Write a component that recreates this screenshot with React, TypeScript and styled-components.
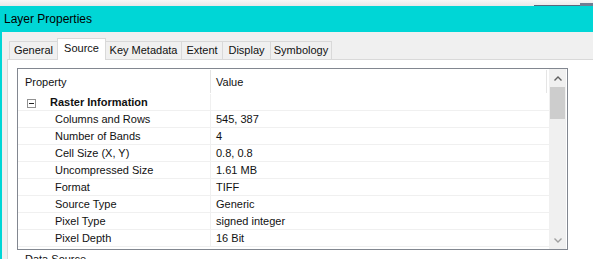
import styled, { createGlobalStyle } from "styled-components";

const Global = createGlobalStyle`
    html, body {
        margin: 0;
        padding: 0;
        background: #f0f0f0;
    }
`;

const TEAL = "#00d6d6";

const Frame = styled.div`
    width: 593px;
    height: 259px;
    overflow: hidden;
    background: #f0f0f0;
    display: flex;
    flex-direction: column;
    font-family: "Liberation Sans", Arial, sans-serif;
    font-size: 11px;
    color: #111;
`;
const TopStrip = styled.div`
    height: 6px;
    flex: none;
    background: linear-gradient(#f7f7f7, #e8e8e8);
    display: flex;
    justify-content: flex-end;
    align-items: flex-end;
`;
const EdgeLine = styled.div`
    width: 46px;
    height: 1px;
    background: #58677c;
`;
const EdgeBlock = styled.div`
    width: 13px;
    height: 3px;
    background: #6f7e93;
`;
const TitleBar = styled.div`
    height: 26px;
    flex: none;
    background: ${TEAL};
    padding-left: 4px;
    font-size: 12px;
    line-height: 26px;
    color: #000;
`;
const Body = styled.div`
    flex: 1;
    min-height: 0;
    border-left: 2px solid ${TEAL};
    display: flex;
    flex-direction: column;
`;
const TabStrip = styled.div`
    display: flex;
    align-items: flex-end;
    padding: 6px 0 0 7px;
    flex: none;
`;
const Tab = styled.div<{ $active?: boolean; $w: number }>`
    box-sizing: border-box;
    width: ${(p) => p.$w}px;
    height: ${(p) => (p.$active ? 22 : 18)}px;
    margin-left: -1px;
    margin-bottom: ${(p) => (p.$active ? -1 : 0)}px;
    padding-top: ${(p) => (p.$active ? 1 : 0)}px;
    border: 1px solid #d9d9d9;
    border-bottom: none;
    background: ${(p) => (p.$active ? "#fff" : "#f0f0f0")};
    position: relative;
    z-index: ${(p) => (p.$active ? 1 : 0)};
    text-align: center;
    line-height: 17px;
    white-space: nowrap;
    &:first-child {
        margin-left: 0;
    }
`;
const Panel = styled.div`
    flex: 1;
    margin-left: 5px;
    background: #fff;
    border: 1px solid #d9d9d9;
    border-right: none;
    padding: 8px 0 0 9px;
`;
const GridBox = styled.div`
    box-sizing: border-box;
    width: 551px;
    height: 182px;
    border: 1px solid #828790;
    display: flex;
    background: #fff;
`;
const Table = styled.div`
    width: 531px;
    overflow: hidden;
`;
const HeaderRow = styled.div`
    height: 25px;
    display: grid;
    grid-template-columns: 193px 336px;
`;
const HeaderCell = styled.div<{ $pad: number }>`
    box-sizing: border-box;
    height: 23px;
    margin-top: 1px;
    padding: 2px 0 0 ${(p) => p.$pad}px;
    line-height: 21px;
    border-right: 1px solid #e5e5e5;
`;
const Row = styled.div`
    box-sizing: border-box;
    height: 17px;
    display: grid;
    grid-template-columns: 193px 1fr;
    border-bottom: 1px solid #f0f0f0;
    line-height: 17px;
    white-space: nowrap;
`;
const NameCell = styled.div<{ $pad: number }>`
    border-right: 1px solid #f0f0f0;
    padding-left: ${(p) => p.$pad}px;
    display: flex;
    align-items: center;
`;
const ValueCell = styled.div`
    padding-left: 5px;
`;
const Expander = styled.span`
    box-sizing: border-box;
    width: 9px;
    height: 9px;
    margin-top: 1px;
    border: 1px solid #919191;
    position: relative;
    flex: none;
    &::after {
        content: "";
        position: absolute;
        left: 1px;
        top: 3px;
        width: 5px;
        height: 1px;
        background: #222;
    }
`;
const GroupLabel = styled.span`
    font-weight: bold;
    margin-left: 14px;
`;
const Scrollbar = styled.div`
    width: 17px;
    margin-right: 1px;
    background: #f0f0f0;
    display: flex;
    flex-direction: column;
`;
const ArrowButton = styled.div<{ $h: number }>`
    height: ${(p) => p.$h}px;
    display: flex;
    align-items: center;
    justify-content: center;
    flex: none;
`;
const Thumb = styled.div`
    height: 32px;
    width: 15px;
    margin-left: 1px;
    background: #cdcdcd;
    flex: none;
`;
const Track = styled.div`
    flex: 1;
`;
const FooterLabel = styled.div`
    margin-top: 3px;
    padding-left: 8px;
    line-height: 13px;
`;

const tabs = [
    { label: "General", w: 49 },
    { label: "Source", w: 49, active: true },
    { label: "Key Metadata", w: 77 },
    { label: "Extent", w: 42 },
    { label: "Display", w: 49 },
    { label: "Symbology", w: 62 },
];

const rows = [
    ["Columns and Rows", "545, 387"],
    ["Number of Bands", "4"],
    ["Cell Size (X, Y)", "0.8, 0.8"],
    ["Uncompressed Size", "1.61 MB"],
    ["Format", "TIFF"],
    ["Source Type", "Generic"],
    ["Pixel Type", "signed integer"],
    ["Pixel Depth", "16 Bit"],
];

function Chevron({ up, color }: { up?: boolean; color: string }) {
    return (
        <svg width="8" height="5" viewBox="0 0 8 5">
            <polyline
                points={up ? "0.5,4.5 4,1 7.5,4.5" : "0.5,0.5 4,4 7.5,0.5"}
                fill="none"
                stroke={color}
                strokeWidth="1.4"
            />
        </svg>
    );
}

export default function App() {
    return (
        <Frame>
            <Global />
            <TopStrip>
                <EdgeLine />
                <EdgeBlock />
            </TopStrip>
            <TitleBar>Layer Properties</TitleBar>
            <Body>
                <TabStrip>
                    {tabs.map((t) => (
                        <Tab key={t.label} $w={t.w} $active={t.active}>
                            {t.label}
                        </Tab>
                    ))}
                </TabStrip>
                <Panel>
                    <GridBox>
                        <Table>
                            <HeaderRow>
                                <HeaderCell $pad={7}>Property</HeaderCell>
                                <HeaderCell $pad={5}>Value</HeaderCell>
                            </HeaderRow>
                            <Row>
                                <NameCell $pad={9}>
                                    <Expander />
                                    <GroupLabel>Raster Information</GroupLabel>
                                </NameCell>
                                <ValueCell />
                            </Row>
                            {rows.map(([name, value]) => (
                                <Row key={name}>
                                    <NameCell $pad={37}>{name}</NameCell>
                                    <ValueCell>{value}</ValueCell>
                                </Row>
                            ))}
                        </Table>
                        <Scrollbar>
                            <ArrowButton $h={18}>
                                <Chevron up color="#606060" />
                            </ArrowButton>
                            <Thumb />
                            <Track />
                            <ArrowButton $h={17}>
                                <Chevron color="#a0a0a0" />
                            </ArrowButton>
                        </Scrollbar>
                    </GridBox>
                    <FooterLabel>Data Source</FooterLabel>
                </Panel>
            </Body>
        </Frame>
    );
}
